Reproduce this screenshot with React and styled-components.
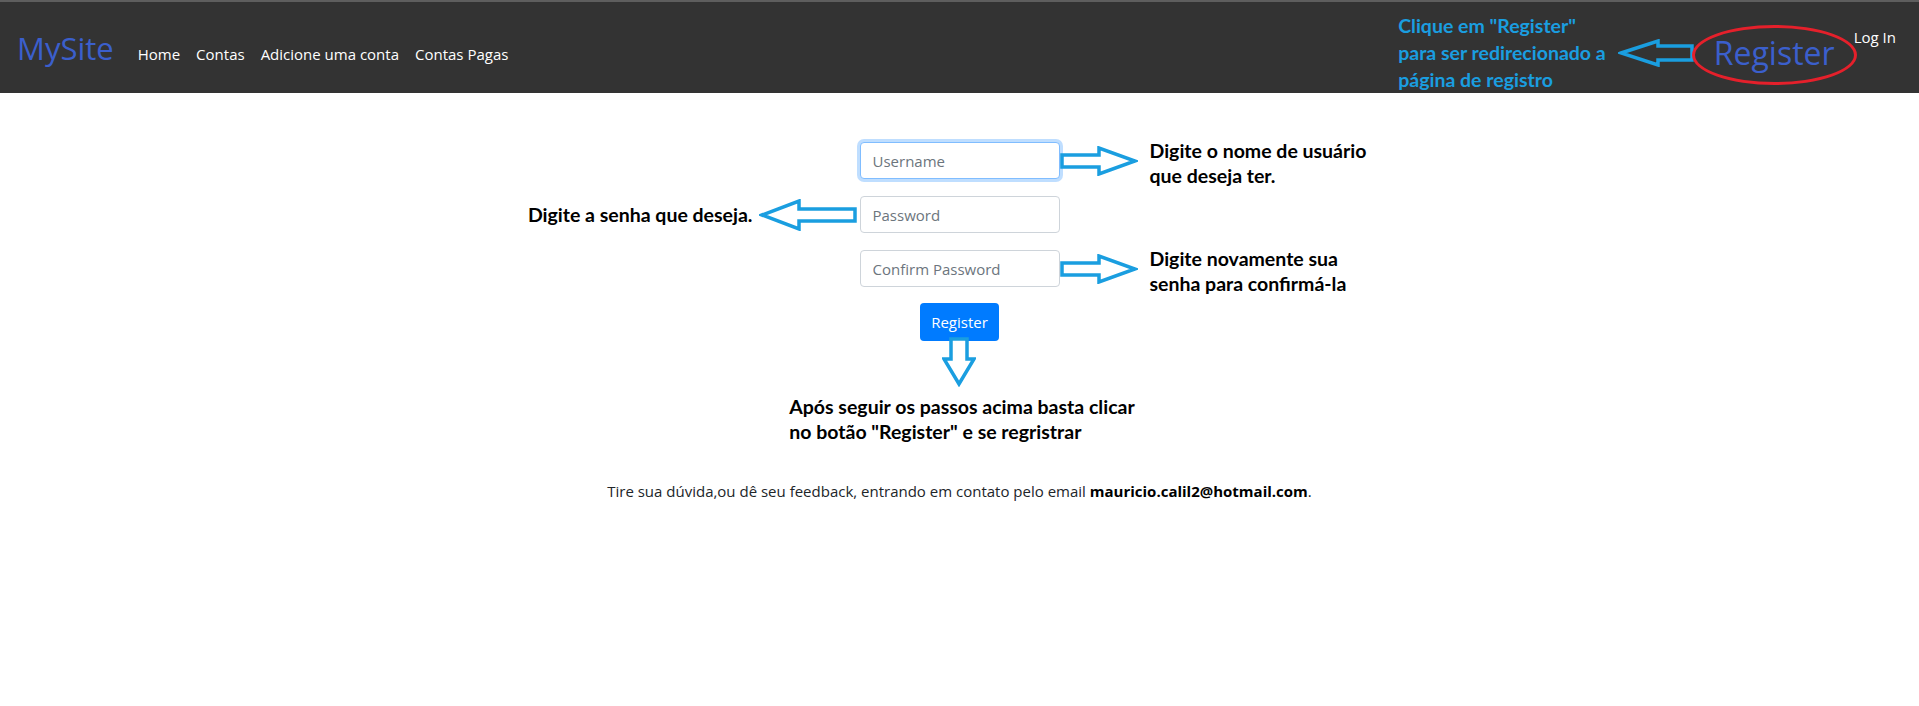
import React from "react";
import styled, { createGlobalStyle, css } from "styled-components";

const GlobalStyle = createGlobalStyle`
  html, body {
    margin: 0;
    padding: 0;
    background: #fff;
  }
  body {
    font-family: "Open Sans", "Noto Sans", sans-serif;
    color: #212529;
  }
  * {
    box-sizing: border-box;
  }
`;

const Navbar = styled.nav`
  height: 93px;
  background: #333333;
  border-top: 2px solid #5e5e5e;
  display: flex;
  align-items: stretch;
  padding: 0 16px 0 17px;
`;

const LeftGroup = styled.div`
  display: flex;
  align-items: baseline;
  padding-top: 28px;
`;

const Brand = styled.a`
  font-size: 31px;
  line-height: 36px;
  color: #3b5fcc;
  margin-right: 16px;
  text-decoration: none;
`;

const NavLink = styled.a`
  font-size: 15px;
  color: #fff;
  padding: 0 8px;
  text-decoration: none;
`;

const RightGroup = styled.div`
  margin-left: auto;
  display: flex;
  align-items: center;
  padding-top: 10px;
`;

const Note = styled.div`
  font-family: Lato, "Open Sans", sans-serif;
  font-weight: 700;
  font-size: 19.5px;
  line-height: ${(p) => p.$lh || 25}px;
  color: ${(p) => p.$color || "#000"};
  white-space: nowrap;
`;

const NavNote = styled(Note)`
  margin-right: 12px;
`;

const Circled = styled.div`
  width: 165px;
  height: 60px;
  margin-top: 4px;
  border: 3px solid #e5202b;
  border-radius: 50%;
  margin-left: -2px;
  display: flex;
  align-items: center;
  justify-content: center;
  padding-bottom: 4px;
`;

const BigLink = styled.a`
  font-size: 32px;
  color: #3b5fcc;
  text-decoration: none;
`;

const LogIn = styled(NavLink)`
  align-self: flex-start;
  margin-top: 25px;
  margin-left: -11px;
  padding-right: 7px;
`;

const Main = styled.main`
  display: flex;
  flex-direction: column;
  align-items: center;
  padding-top: 49px;
`;

const FormGrid = styled.div`
  width: 100%;
  display: grid;
  grid-template-columns: 1fr 200px 1fr;
  grid-auto-rows: 37px;
  row-gap: 17px;
`;

const Side = styled.div`
  display: flex;
  align-items: center;
  justify-content: ${(p) => (p.$left ? "flex-end" : "flex-start")};
  ${(p) =>
    p.$left &&
    css`
      padding-right: 3px;
    `}
`;

const Input = styled.input`
  width: 100%;
  height: 37px;
  padding: 0 12px;
  font-family: "Open Sans", sans-serif;
  font-size: 15px;
  color: #495057;
  background: #fff;
  border: 1px solid #ced4da;
  border-radius: 4px;
  outline: none;
  &::placeholder {
    color: #6c757d;
  }
  ${(p) =>
    p.$focused &&
    css`
      border-color: #80bdff;
      box-shadow: 0 0 0 3px rgba(0, 123, 255, 0.25);
    `}
`;

const SideText = styled(Note)`
  padding-top: 5px;
  margin-left: 12px;
`;

const LeftText = styled(Note)`
  margin-right: 6px;
`;

const Button = styled.button`
  margin-top: 16px;
  height: 38px;
  padding: 0 11px;
  font-family: "Open Sans", sans-serif;
  font-size: 15px;
  color: #fff;
  background: #007bff;
  border: none;
  border-radius: 4px;
`;

const DownArrowBox = styled.div`
  margin-top: -4px;
  margin-right: 2px;
  height: 50px;
`;

const Steps = styled(Note)`
  margin-top: 7px;
  text-align: left;
  margin-left: 5px;
`;

const Footer = styled.p`
  margin: 36px 0 0;
  font-size: 15px;
  line-height: 22px;
  color: #212529;
  & b {
    color: #000;
  }
`;

const Arrow = ({ w, h, points, fill = "#fff" }) => (
  <svg width={w} height={h} viewBox={`0 0 ${w} ${h}`} style={{ display: "block" }}>
    <polygon
      points={points}
      fill={fill}
      stroke="#1a9ee0"
      strokeWidth="3.5"
      strokeLinejoin="miter"
    />
  </svg>
);

const RightArrow = () => (
  <Arrow w={78} h={30} points="2,9 39,9 39,2 75,15 39,28 39,21 2,21" />
);

export default function App() {
  return (
    <>
      <GlobalStyle />
      <Navbar>
        <LeftGroup>
          <Brand>MySite</Brand>
          <NavLink>Home</NavLink>
          <NavLink>Contas</NavLink>
          <NavLink>Adicione uma conta</NavLink>
          <NavLink>Contas Pagas</NavLink>
        </LeftGroup>
        <RightGroup>
          <NavNote $color="#1a9ee0" $lh={27}>
            Clique em "Register"
            <br />
            para ser redirecionado a
            <br />
            página de registro
          </NavNote>
          <Arrow
            w={76}
            h={28}
            fill="none"
            points="3,14 40,2 40,7 74,7 74,21 40,21 40,26"
          />
          <Circled>
            <BigLink>Register</BigLink>
          </Circled>
        </RightGroup>
        <LogIn>Log In</LogIn>
      </Navbar>

      <Main>
        <FormGrid>
          <Side $left />
          <Input $focused placeholder="Username" />
          <Side>
            <RightArrow />
            <SideText>
              Digite o nome de usuário
              <br />
              que deseja ter.
            </SideText>
          </Side>

          <Side $left>
            <LeftText>Digite a senha que deseja.</LeftText>
            <Arrow
              w={98}
              h={32}
              points="3,16 40,2 40,10 96,10 96,22 40,22 40,30"
            />
          </Side>
          <Input type="password" placeholder="Password" />
          <Side />

          <Side $left />
          <Input type="password" placeholder="Confirm Password" />
          <Side>
            <RightArrow />
            <SideText>
              Digite novamente sua
              <br />
              senha para confirmá-la
            </SideText>
          </Side>
        </FormGrid>

        <Button>Register</Button>
        <DownArrowBox>
          <Arrow w={34} h={50} points="9,2 25,2 25,22 32,22 17,47 2,22 9,22" />
        </DownArrowBox>

        <Steps>
          Após seguir os passos acima basta clicar
          <br />
          no botão "Register" e se regristrar
        </Steps>

        <Footer>
          Tire sua dúvida,ou dê seu feedback, entrando em contato pelo email{" "}
          <b>mauricio.calil2@hotmail.com</b>.
        </Footer>
      </Main>
    </>
  );
}
